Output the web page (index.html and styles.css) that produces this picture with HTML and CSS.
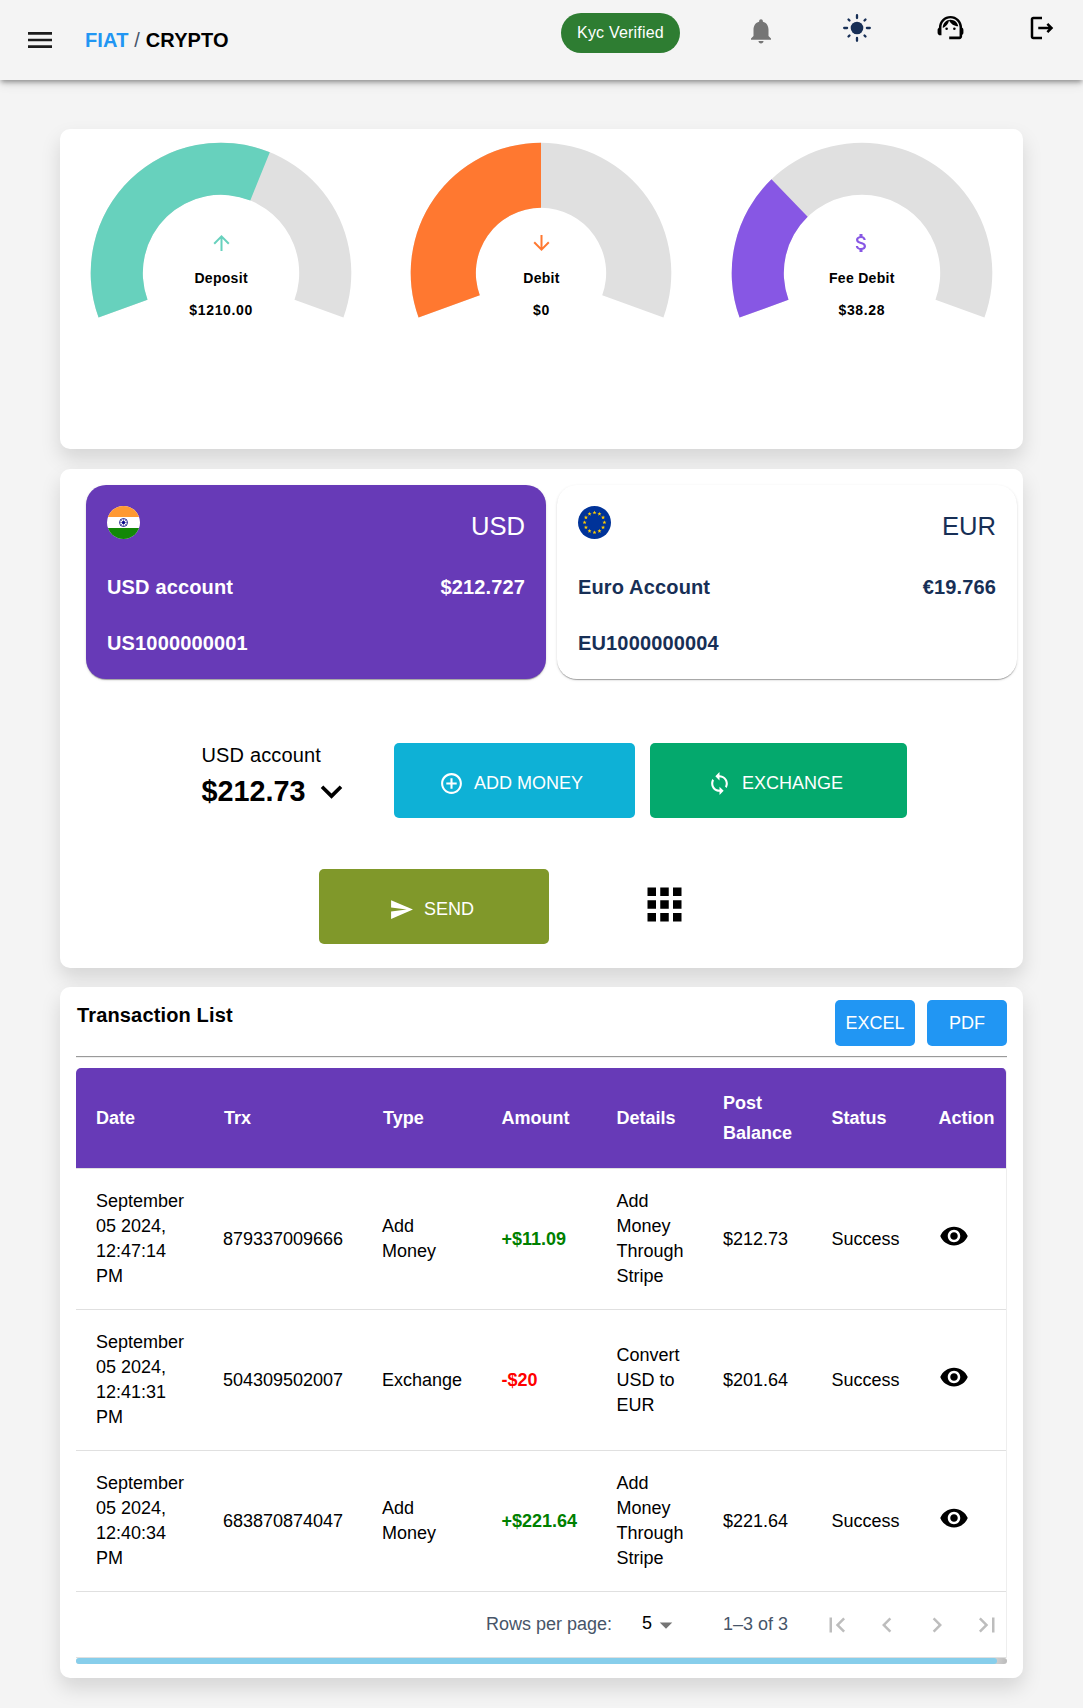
FILE: index.html
```html
<!DOCTYPE html>
<html lang="en">
<head>
<meta charset="utf-8">
<title>Dashboard</title>
<link rel="stylesheet" href="styles.css">
</head>
<body>
<svg class="defs" aria-hidden="true">
  <symbol id="eye" viewBox="0 0 24 24"><path d="M12 4.500C7 4.500 2.730 7.610 1 12c1.730 4.390 6 7.500 11 7.500s9.270-3.110 11-7.500c-1.730-4.390-6-7.500-11-7.500zM12 17c-2.760 0-5-2.240-5-5s2.240-5 5-5 5 2.240 5 5-2.240 5-5 5zm0-8c-1.660 0-3 1.340-3 3s1.340 3 3 3 3-1.340 3-3-1.340-3-3-3z"/></symbol>
  <symbol id="star" viewBox="-5 -5 10 10"><path d="M0-5 1.200-1.600 4.800-1.600 1.900.6 3 4 0 1.900-3 4-1.900.6-4.800-1.600-1.200-1.600z"/></symbol>
</svg>

<header class="topbar">
  <svg class="menu-icon" viewBox="0 0 24 24"><path d="M3 18h18v-2H3v2zm0-5h18v-2H3v2zm0-7v2h18V6H3z"/></svg>
  <div class="brand"><b class="fiat">FIAT</b> / <b class="crypto">CRYPTO</b></div>
  <div class="tools">
    <span class="kyc">Kyc Verified</span>
    <svg class="bell" viewBox="0 0 24 24"><path d="M12 22c1.100 0 2-.9 2-2h-4c0 1.100.89 2 2 2zm6-6v-5c0-3.070-1.640-5.640-4.500-6.320V4c0-.83-.67-1.500-1.500-1.500s-1.500.67-1.500 1.500v.68C7.630 5.360 6 7.920 6 11v5l-2 2v1h16v-1l-2-2z"/></svg>
    <svg class="sun" viewBox="-15 -15 30 30"><circle r="6.300"/><path d="M0-12.800v2.900M0 12.800V9.900M-12.800 0h2.900M12.800 0H9.900M-8.500-8.500l1 1M8.500-8.500l-1 1M-8.500 8.500l1-1M8.500 8.500l-1-1"/></svg>
    <svg class="agent" viewBox="0 0 24 24"><path d="M21 12.220C21 6.730 16.740 3 12 3c-4.690 0-9 3.650-9 9.280-.6.34-1 .98-1 1.720v2c0 1.100.9 2 2 2h1v-6.100c0-3.870 3.130-7 7-7s7 3.130 7 7V19h-8v2h8c1.100 0 2-.9 2-2v-1.220c.59-.31 1-.92 1-1.640v-2.300c0-.7-.41-1.310-1-1.620z"/><circle cx="9" cy="13" r="1"/><circle cx="15" cy="13" r="1"/><path d="M18 11.030C17.520 8.180 15.040 6 12.050 6c-3.030 0-6.290 2.510-6.030 6.450 2.470-1.010 4.330-3.210 4.860-5.890 1.310 2.630 4 4.440 7.120 4.470z"/></svg>
    <svg class="logout" viewBox="0 0 24 24"><path d="M17 8l-1.410 1.410L17.170 11H9v2h8.170l-1.580 1.580L17 16l4-4-4-4zM5 5h7V3H5c-1.100 0-2 .9-2 2v14c0 1.100.9 2 2 2h7v-2H5V5z"/></svg>
  </div>
</header>

<main class="page">
  <section class="panel gauges">
    <div class="gauge deposit">
      <svg class="dial" viewBox="-131 -131 262 180"><path class="track" d="M-122.440 44.570A130.300 130.300 0 1 1 122.440 44.570L73.480 26.750A78.200 78.200 0 1 0-73.480 26.750z"/><path class="value" d="M-122.440 44.570A130.300 130.300 0 0 1 48.810-120.810L29.290-72.510A78.200 78.200 0 0 0-73.480 26.750z"/></svg>
      <div class="reading">
        <svg viewBox="0 0 24 24"><path d="m4 12 1.410 1.410L11 7.830V20h2V7.830l5.580 5.590L20 12l-8-8-8 8z"/></svg>
        <span>Deposit</span><span class="sum">$1210.00</span>
      </div>
    </div>
    <div class="gauge debit">
      <svg class="dial" viewBox="-131 -131 262 180"><path class="track" d="M-122.440 44.570A130.300 130.300 0 1 1 122.440 44.570L61.220 22.280A65.150 65.150 0 1 0-61.220 22.280z"/><path class="value" d="M-122.440 44.570A130.300 130.300 0 0 1 0-130.300L0-65.150A65.150 65.150 0 0 0-61.220 22.280z"/></svg>
      <div class="reading">
        <svg viewBox="0 0 24 24"><path d="m20 12-1.410-1.410L13 16.170V4h-2v12.170l-5.580-5.590L4 12l8 8 8-8z"/></svg>
        <span>Debit</span><span class="sum">$0</span>
      </div>
    </div>
    <div class="gauge fee">
      <svg class="dial" viewBox="-131 -131 262 180"><path class="track" d="M-122.440 44.570A130.300 130.300 0 1 1 122.440 44.570L73.480 26.750A78.200 78.200 0 1 0-73.480 26.750z"/><path class="value" d="M-122.440 44.570A130.300 130.300 0 0 1-90.510-93.730L-54.320-56.250A78.200 78.200 0 0 0-73.480 26.750z"/></svg>
      <div class="reading">
        <svg viewBox="0 0 24 24"><path d="M11.800 10.900c-2.270-.59-3-1.200-3-2.150 0-1.090 1.010-1.850 2.700-1.850 1.780 0 2.440.85 2.500 2.100h2.210c-.07-1.720-1.120-3.300-3.210-3.810V3h-3v2.160c-1.940.42-3.500 1.680-3.500 3.610 0 2.310 1.910 3.460 4.700 4.130 2.500.6 3 1.480 3 2.410 0 .69-.49 1.790-2.700 1.790-2.060 0-2.870-.92-2.980-2.100h-2.200c.12 2.190 1.760 3.420 3.680 3.830V21h3v-2.150c1.950-.37 3.500-1.500 3.500-3.550 0-2.840-2.430-3.810-4.700-4.400z"/></svg>
        <span>Fee Debit</span><span class="sum">$38.28</span>
      </div>
    </div>
  </section>

  <section class="panel wallet">
    <div class="accounts">
      <article class="account active">
        <div class="row top">
          <svg class="flag" viewBox="0 0 33 33"><clipPath id="round"><circle cx="16.500" cy="16.500" r="16.500"/></clipPath><g clip-path="url(#round)"><path fill="#fff" d="M0 0h33v33H0z"/><path fill="#ff9933" d="M0 0h33v11H0z"/><path fill="#128807" d="M0 22h33v11H0z"/></g><g fill="none" stroke="#2a2a94"><circle cx="16.500" cy="16.500" r="4"/><path stroke-width=".6" d="M16.500 12.500v8M12.500 16.500h8M13.700 13.700l5.600 5.600M19.300 13.700l-5.600 5.600"/></g><circle cx="16.500" cy="16.500" r="1.500" fill="#000088"/></svg>
          <span class="code">USD</span>
        </div>
        <div class="row"><span>USD account</span><span>$212.727</span></div>
        <div class="row number">US1000000001</div>
      </article>
      <article class="account">
        <div class="row top">
          <svg class="flag" viewBox="-16.500 -16.500 33 33"><circle r="16.500" fill="#039"/><g fill="#fc0"><use href="#star" x="-2.200" y="-12.100" width="4.400" height="4.400"/><use href="#star" x="2.750" y="-10.770" width="4.400" height="4.400"/><use href="#star" x="6.370" y="-7.150" width="4.400" height="4.400"/><use href="#star" x="7.700" y="-2.200" width="4.400" height="4.400"/><use href="#star" x="6.370" y="2.750" width="4.400" height="4.400"/><use href="#star" x="2.750" y="6.370" width="4.400" height="4.400"/><use href="#star" x="-2.200" y="7.700" width="4.400" height="4.400"/><use href="#star" x="-7.150" y="6.370" width="4.400" height="4.400"/><use href="#star" x="-10.770" y="2.750" width="4.400" height="4.400"/><use href="#star" x="-12.100" y="-2.200" width="4.400" height="4.400"/><use href="#star" x="-10.770" y="-7.150" width="4.400" height="4.400"/><use href="#star" x="-7.150" y="-10.770" width="4.400" height="4.400"/></g></svg>
          <span class="code">EUR</span>
        </div>
        <div class="row"><span>Euro Account</span><span>€19.766</span></div>
        <div class="row number">EU1000000004</div>
      </article>
    </div>

    <div class="actions">
      <div class="balance">
        <div class="balance-name">USD account</div>
        <div class="balance-sum">$212.73<svg viewBox="0 0 24 24"><path d="M7.410 8.590 12 13.170l4.590-4.580L18 10l-6 6-6-6z"/></svg></div>
      </div>
      <button class="btn add"><svg viewBox="0 0 24 24"><path d="M13 7h-2v4H7v2h4v4h2v-4h4v-2h-4V7zm-1-5C6.480 2 2 6.480 2 12s4.480 10 10 10 10-4.480 10-10S17.520 2 12 2zm0 18c-4.410 0-8-3.590-8-8s3.590-8 8-8 8 3.590 8 8-3.590 8-8 8z"/></svg>ADD MONEY</button>
      <button class="btn exchange"><svg viewBox="0 0 24 24"><path d="M12 4V1L8 5l4 4V6c3.310 0 6 2.690 6 6 0 1.010-.25 1.970-.7 2.800l1.460 1.460C19.540 15.030 20 13.570 20 12c0-4.420-3.580-8-8-8zm0 14c-3.310 0-6-2.690-6-6 0-1.010.25-1.970.7-2.800L5.240 7.740C4.460 8.970 4 10.430 4 12c0 4.420 3.580 8 8 8v3l4-4-4-4v3z"/></svg>EXCHANGE</button>
    </div>
    <div class="actions second">
      <button class="btn send"><svg viewBox="0 0 24 24"><path d="M2.010 21 23 12 2.010 3 2 10l15 2-15 2z"/></svg>SEND</button>
      <svg class="apps" viewBox="0 0 24 24"><path d="M4 8h4V4H4v4zm6 12h4v-4h-4v4zm-6 0h4v-4H4v4zm0-6h4v-4H4v4zm6 0h4v-4h-4v4zm6-10v4h4V4h-4zm-6 4h4V4h-4v4zm6 6h4v-4h-4v4zm0 6h4v-4h-4v4z"/></svg>
    </div>
  </section>

  <section class="panel transactions">
    <div class="list-head">
      <h2>Transaction List</h2>
      <div class="exports"><button>EXCEL</button><button>PDF</button></div>
    </div>
    <div class="rule"></div>
    <div class="sheet">
      <table>
        <colgroup><col class="c-date"><col class="c-trx"><col class="c-type"><col class="c-amount"><col class="c-details"><col class="c-post"><col class="c-status"><col class="c-action"></colgroup>
        <thead><tr><th>Date</th><th>Trx</th><th>Type</th><th>Amount</th><th>Details</th><th>Post Balance</th><th>Status</th><th>Action</th></tr></thead>
        <tbody>
          <tr><td>September 05 2024, 12:47:14 PM</td><td>879337009666</td><td>Add Money</td><td class="plus">+$11.09</td><td>Add Money Through Stripe</td><td>$212.73</td><td>Success</td><td><svg class="eye"><use href="#eye"/></svg></td></tr>
          <tr><td>September 05 2024, 12:41:31 PM</td><td>504309502007</td><td>Exchange</td><td class="minus">-$20</td><td>Convert USD to EUR</td><td>$201.64</td><td>Success</td><td><svg class="eye"><use href="#eye"/></svg></td></tr>
          <tr><td>September 05 2024, 12:40:34 PM</td><td>683870874047</td><td>Add Money</td><td class="plus">+$221.64</td><td>Add Money Through Stripe</td><td>$221.64</td><td>Success</td><td><svg class="eye"><use href="#eye"/></svg></td></tr>
        </tbody>
      </table>
      <div class="pager">
        <span class="per-page">Rows per page:</span>
        <span class="size">5<svg viewBox="0 0 24 24"><path d="m7 10 5 5 5-5z"/></svg></span>
        <span class="range">1–3 of 3</span>
        <svg class="nav" viewBox="0 0 24 24"><path d="M18.410 16.590 13.820 12l4.590-4.590L17 6l-6 6 6 6zM6 6h2v12H6z"/></svg>
        <svg class="nav" viewBox="0 0 24 24"><path d="M15.410 16.590 10.830 12l4.580-4.590L14 6l-6 6 6 6z"/></svg>
        <svg class="nav" viewBox="0 0 24 24"><path d="M8.590 16.590 13.170 12 8.590 7.410 10 6l6 6-6 6z"/></svg>
        <svg class="nav" viewBox="0 0 24 24"><path d="M5.590 7.410 10.180 12l-4.590 4.590L7 18l6-6-6-6zM16 6h2v12h-2z"/></svg>
      </div>
    </div>
    <div class="scrollbar"><div class="thumb"></div></div>
  </section>
</main>
</body>
</html>
```
FILE: styles.css
```css
* { box-sizing: border-box; }
body {
  margin: 0;
  background: #f4f4f4;
  color: #000;
  font-family: "Liberation Sans", Arial, sans-serif;
}
svg { display: block; flex: none; fill: currentColor; }
button { border: 0; color: #fff; font: 18px "Liberation Sans", Arial, sans-serif; }
.defs { width: 0; height: 0; position: absolute; }

.topbar {
  display: flex;
  align-items: center;
  height: 80px;
  padding: 0 26px 0 24px;
  background: #f4f4f4;
  box-shadow: 0 3px 5px -1px rgba(0,0,0,.38), 0 5px 10px rgba(0,0,0,.08);
}
.menu-icon { width: 32px; height: 32px; color: #1c1c1c; }
.brand { margin-left: 29px; font-size: 20px; letter-spacing: .15px; color: #475569; }
.fiat { color: #2196f3; }
.crypto { color: #000; }
.tools { display: flex; align-items: flex-start; align-self: flex-start; margin-left: auto; padding-top: 13px; }
.kyc {
  width: 119px;
  height: 40px;
  border-radius: 20px;
  background: #2e7d32;
  color: #fff;
  font-size: 16px;
  letter-spacing: .2px;
  line-height: 39px;
  text-align: center;
}
.tools svg { width: 30px; height: 30px; }
.tools .bell { margin: 3px 0 0 66px; color: #757575; }
.tools .sun { margin-left: 66px; color: #172f56; stroke: currentColor; stroke-width: 2.300; stroke-linecap: round; }
.tools .sun circle { stroke: none; }
.tools .agent { width: 31px; height: 31px; margin: -1px 0 0 62.500px; }
.tools .logout { margin-left: 61.500px; }

.page { padding: 49px 60px 30px; }
.panel {
  border-radius: 10px;
  background: #fff;
  box-shadow: 0 10px 20px rgba(0,0,0,.13);
}

.gauges {
  display: grid;
  grid-template-columns: repeat(3, 1fr);
  height: 320px;
  padding: 13px 1px 0;
  align-items: start;
}
.gauge { display: grid; justify-items: center; }
.dial, .reading { grid-area: 1 / 1; }
.dial { width: 262px; height: 180px; }
.track { fill: #e0e0e0; }
.deposit .value, .deposit .reading svg { fill: #67d1bd; }
.debit .value, .debit .reading svg { fill: #ff7830; }
.fee .value, .fee .reading svg { fill: #8757e4; }
.reading {
  display: flex;
  flex-direction: column;
  align-items: center;
  padding-top: 89px;
  font-size: 14px;
  font-weight: 700;
  line-height: 32px;
  letter-spacing: .3px;
}
.reading svg { width: 25px; height: 24px; margin-bottom: 7px; }
.sum { letter-spacing: .65px; }

.wallet { height: 499px; margin-top: 20px; padding: 16px 6px 0 26px; }
.accounts { display: grid; grid-template-columns: 1fr 1fr; gap: 11px; }
.account {
  height: 194px;
  padding: 21px;
  border-radius: 20px;
  color: #172f56;
  font-size: 20px;
  font-weight: 700;
  line-height: 32px;
  letter-spacing: .15px;
  box-shadow: 0 2px 1px -1px rgba(0,0,0,.2), 0 1px 1px rgba(0,0,0,.14), 0 1px 3px rgba(0,0,0,.12);
}
.account.active { background: #673ab7; color: #fff; }
.row { display: flex; justify-content: space-between; }
.row.top { height: 65px; }
.row.number { margin-top: 24px; }
.flag { width: 33px; height: 33px; }
.code { font-size: 25.600px; font-weight: 400; line-height: 40px; letter-spacing: 0; }

.actions { display: flex; align-items: flex-start; margin: 64px 0 0 115.500px; }
.actions.second { margin: 51px 0 0 233px; }
.balance { width: 192.500px; margin-top: -3px; }
.balance-name { font-size: 20px; line-height: 30px; letter-spacing: .15px; }
.balance-sum { display: flex; align-items: center; height: 42px; font-size: 28.800px; font-weight: 700; }
.balance-sum svg { width: 43px; height: 43px; margin: 0 0 0 4px; }
.btn {
  display: flex;
  align-items: center;
  height: 75px;
  gap: 10px;
  padding: 5px 0 0;
  border-radius: 5px;
}
.btn svg { width: 25px; height: 25px; }
.add { width: 241px; padding-left: 45px; background: #0eb1d6; }
.exchange { width: 257px; margin-left: 15px; padding-left: 57px; background: #04a96d; }
.send { width: 230px; padding-left: 70px; background: #80982a; }
.apps { width: 51px; height: 51px; margin: 9.500px 0 0 89.500px; }

.transactions { height: 691px; margin-top: 19px; padding: 13px 16px 0; }
.list-head { display: flex; justify-content: space-between; height: 56px; }
h2 { margin: 0 0 0 1px; font-size: 20px; line-height: 30px; letter-spacing: .15px; }
.exports { display: flex; gap: 12px; }
.exports button { width: 80px; height: 46px; padding: 0; border-radius: 5px; background: #2196f3; }
.rule { height: 2px; border-top: 1px solid #9a9a9a; border-bottom: 1px solid #eee; }
.sheet { margin-top: 10px; border-right: 1px solid #eee; border-radius: 5px 5px 0 0; overflow: hidden; }
table { width: 930px; table-layout: fixed; border-collapse: separate; border-spacing: 0; font-size: 18px; line-height: 25px; }
.c-date { width: 127px; }
.c-trx { width: 159px; }
.c-type { width: 119.500px; }
.c-amount { width: 115px; }
.c-details { width: 106.500px; }
.c-post { width: 108.500px; }
.c-status { width: 107px; }
th, td { padding: 0 0 0 20px; border-bottom: 1px solid #e0e0e0; text-align: left; vertical-align: middle; }
th { height: 101px; background: #673ab7; color: #fff; line-height: 30px; }
td { height: 141px; padding-right: 18px; }
td:last-child, th { padding-right: 0; }
th:nth-child(2), th:nth-child(3) { padding-left: 21px; }
th:nth-child(6) { padding-right: 20px; }
.plus { color: #008000; font-weight: 700; }
.minus { color: #f00; font-weight: 700; }
.eye { width: 30px; height: 30px; margin-bottom: 6px; }
.pager { display: flex; align-items: center; height: 66px; padding-left: 410px; border-bottom: 1px solid #e0e0e0; color: #475569; font-size: 18px; }
.pager > span { flex: none; line-height: 25px; margin-bottom: 1px; }
.per-page { width: 156px; }
.pager .size { display: flex; align-items: center; width: 81px; height: 25px; margin-bottom: 2px; color: #000; }
.size svg { width: 30px; height: 30px; margin: 3px 0 0 -1px; color: #757575; }
.range { width: 99px; }
.nav { width: 30px; height: 30px; margin-right: 20px; color: #bdbdbd; }
.scrollbar { height: 6px; border-radius: 3px; background: linear-gradient(90deg, #ddd 98%, #bbb); }
.thumb { width: 921px; height: 6px; border-radius: 3px; background: #87ceeb; }
```
